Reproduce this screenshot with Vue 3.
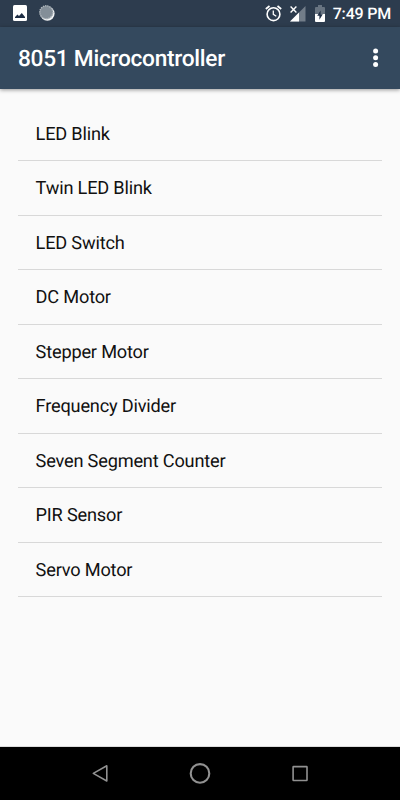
<script setup>
const experiments = [
  'LED Blink',
  'Twin LED Blink',
  'LED Switch',
  'DC Motor',
  'Stepper Motor',
  'Frequency Divider',
  'Seven Segment Counter',
  'PIR Sensor',
  'Servo Motor',
]
</script>

<template>
  <div class="screen">
    <div class="status-bar">
      <div class="notifications">
        <svg width="14" height="16" viewBox="0 0 14 16">
          <rect width="14" height="16" rx="1.5" fill="#fff" />
          <path d="M2 13 V12 L4.5 9.5 L6 11 L8.8 8 L12 12 V13 Z" fill="#1d2d44" />
        </svg>
        <svg width="16" height="16" viewBox="0 0 16 16">
          <circle cx="8.4" cy="8.6" r="7.2" fill="#f2f4f5" />
          <circle cx="7.3" cy="7.3" r="6.8" fill="#838e98" />
          <circle cx="7.3" cy="7.3" r="6.5" fill="none" stroke="#b0b7bd" stroke-width="1.4" stroke-dasharray="1.2 1" />
        </svg>
      </div>
      <div class="system">
        <svg class="alarm" width="17" height="17" viewBox="0 0 17 17" fill="none" stroke="#fff">
          <circle cx="8.5" cy="9.2" r="6.4" stroke-width="1.6" />
          <path d="M0.8 4 L4.5 1 M12.5 1 L16.2 4" stroke-width="1.7" />
          <path d="M8.3 5.6 V9.3 L11.3 11.2" stroke-width="1.3" />
        </svg>
        <svg class="signal" width="16" height="16" viewBox="0 0 16 16">
          <path d="M15.5 0 V15.5 H0 Z" fill="#727d89" />
          <path d="M0 0 H8.5 V7 H0 Z" fill="#2d3c4e" />
          <path d="M9 6.5 V15.5 H0 Z" fill="#fff" />
          <path d="M0.6 0.6 L6.4 6.4 M6.4 0.6 L0.6 6.4" stroke="#fff" stroke-width="1.4" />
        </svg>
        <svg class="battery" width="10" height="17" viewBox="0 0 10 17">
          <path d="M3 0 H7 V2 H9 Q10 2 10 3 V9 H0 V3 Q0 2 1 2 H3 Z" fill="#687481" />
          <path d="M0 9 H10 V16 Q10 17 9 17 H1 Q0 17 0 16 Z" fill="#fff" />
          <path d="M5.6 5.4 L2.2 10.8 H4.4 V14.8 L7.8 9.2 H5.6 Z" fill="#1d2d44" />
        </svg>
        <span class="time">7:49 PM</span>
      </div>
    </div>

    <header class="app-bar">
      <h1>8051 Microcontroller</h1>
      <svg width="6" height="20" viewBox="0 0 6 20" fill="#fff">
        <circle cx="2.6" cy="3.1" r="2.5" />
        <circle cx="2.6" cy="9.8" r="2.5" />
        <circle cx="2.6" cy="16.5" r="2.5" />
      </svg>
    </header>

    <ul class="list">
      <li v-for="name in experiments" :key="name">{{ name }}</li>
    </ul>

    <nav class="nav-bar">
      <svg width="20" height="22" viewBox="0 0 20 22">
        <path d="M3.3 11.4 L16.8 3.8 V19 Z" />
      </svg>
      <svg width="22" height="22" viewBox="0 0 22 22">
        <circle cx="11" cy="11.4" r="9.3" class="home" />
      </svg>
      <svg width="20" height="22" viewBox="0 0 20 22">
        <rect x="3.1" y="4.6" width="13.9" height="13.9" rx="0.4" />
      </svg>
    </nav>
  </div>
</template>

<style>
body {
  margin: 0;
}
</style>

<style scoped>
.screen {
  display: flex;
  flex-direction: column;
  width: 400px;
  height: 800px;
  overflow: hidden;
  background: #fafafa;
  font-family: Roboto, sans-serif;
  text-rendering: geometricPrecision;
}

svg {
  display: block;
  flex: none;
}

.status-bar {
  display: flex;
  flex: none;
  justify-content: space-between;
  box-sizing: border-box;
  height: 27px;
  padding: 5px 9px 0 13px;
  background: #2d3c4e;
}

.notifications {
  display: flex;
  gap: 12px;
}

.system {
  display: flex;
  align-items: flex-start;
}

.signal {
  margin: 1px 0 0 8px;
}

.battery {
  margin-left: 9px;
}

.time {
  margin-left: 8px;
  color: #fff;
  font-size: 16px;
  font-weight: 500;
  line-height: 17px;
  letter-spacing: -0.2px;
}

.app-bar {
  display: flex;
  flex: none;
  align-items: center;
  justify-content: space-between;
  box-sizing: border-box;
  height: 62px;
  padding: 0 21px 0 18px;
  background: #34495e;
  box-shadow: 0 1px 4px rgba(0, 0, 0, 0.4);
}

h1 {
  margin: 2px 0 0;
  color: #fff;
  font-size: 22.7px;
  font-weight: 500;
  line-height: 28px;
  letter-spacing: -0.28px;
}

.list {
  flex: 1;
  margin: 0;
  padding: 17.5px 18px 0;
  border-bottom: 1px solid #dcdcdc;
  list-style: none;
}

.list li {
  box-sizing: border-box;
  height: 54.5px;
  padding-left: 17.6px;
  border-bottom: 1px solid #d8d8d8;
  color: #111;
  font-size: 18.2px;
  line-height: 56.5px;
  letter-spacing: -0.2px;
}

.nav-bar {
  display: flex;
  flex: none;
  align-items: center;
  justify-content: space-between;
  box-sizing: border-box;
  height: 53px;
  padding: 0 90px 1px;
  background: #000;
}

.nav-bar svg {
  fill: none;
  stroke: #919191;
  stroke-width: 1.6;
  stroke-linejoin: round;
}

.nav-bar .home {
  stroke-width: 2.1;
}
</style>
